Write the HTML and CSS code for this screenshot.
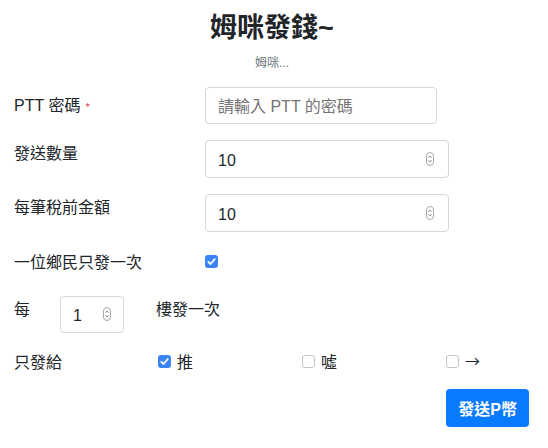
FILE: index.html
```html
<!DOCTYPE html>
<html lang="zh-Hant">
<head>
<meta charset="utf-8">
<title>姆咪發錢~</title>
<link rel="stylesheet" href="styles.css">
</head>
<body>
<div class="page">
  <header class="head">
    <h1 class="title">姆咪發錢~</h1>
    <p class="subtitle">姆咪...</p>
  </header>
  <form class="form">
    <div class="row row-pass">
      <label class="label label-mid">PTT 密碼<span class="req">*</span></label>
      <input class="control control-pass" type="password" placeholder="請輸入 PTT 的密碼">
    </div>
    <div class="row">
      <label class="label">發送數量</label>
      <div class="num num-wide">
        <input class="control" type="text" value="10">
        <svg class="spin" viewBox="0 0 8 14" width="8" height="14"><rect x="0.5" y="0.5" width="7" height="13" rx="3.5" fill="#fff" stroke="#a9a9a9"/><path d="M2.6 5.6 L4 4.2 L5.4 5.6 M2.6 8.4 L4 9.8 L5.4 8.4" fill="none" stroke="#555" stroke-width="0.9"/></svg>
      </div>
    </div>
    <div class="row">
      <label class="label">每筆稅前金額</label>
      <div class="num num-wide">
        <input class="control" type="text" value="10">
        <svg class="spin" viewBox="0 0 8 14" width="8" height="14"><rect x="0.5" y="0.5" width="7" height="13" rx="3.5" fill="#fff" stroke="#a9a9a9"/><path d="M2.6 5.6 L4 4.2 L5.4 5.6 M2.6 8.4 L4 9.8 L5.4 8.4" fill="none" stroke="#555" stroke-width="0.9"/></svg>
      </div>
    </div>
    <div class="row row-check">
      <label class="label">一位鄉民只發一次</label>
      <input class="check" type="checkbox" checked>
    </div>
    <div class="row row-floor">
      <span class="every">每</span>
      <div class="num num-small">
        <input class="control" type="text" value="1">
        <svg class="spin" viewBox="0 0 8 14" width="8" height="14"><rect x="0.5" y="0.5" width="7" height="13" rx="3.5" fill="#fff" stroke="#a9a9a9"/><path d="M2.6 5.6 L4 4.2 L5.4 5.6 M2.6 8.4 L4 9.8 L5.4 8.4" fill="none" stroke="#555" stroke-width="0.9"/></svg>
      </div>
      <span class="floor-text">樓發一次</span>
    </div>
    <div class="row row-targets">
      <span class="target-label">只發給</span>
      <label class="opt"><input class="check" type="checkbox" checked><span class="opt-text">推</span></label>
      <label class="opt"><input class="check" type="checkbox"><span class="opt-text">噓</span></label>
      <label class="opt"><input class="check" type="checkbox"><span class="opt-text arrow">→</span></label>
    </div>
    <div class="actions">
      <button class="btn" type="button">發送P幣</button>
    </div>
  </form>
</div>
</body>
</html>
```
FILE: styles.css
```css
* { box-sizing: border-box; }
html, body { margin: 0; padding: 0; background: #fff; }
body {
  font-family: "Liberation Sans", "Noto Sans CJK TC", sans-serif;
  font-size: 16px;
  line-height: 24px;
  color: #212529;
}
.page { padding: 0 14px; width: 548px; }
.head { text-align: center; padding-top: 11px; }
.title {
  margin: 0;
  font-size: 27px;
  line-height: 34px;
  font-weight: 700;
  padding-right: 4px;
}
.subtitle {
  margin: 9px 0 0;
  font-size: 12px;
  line-height: 18px;
  color: #6c757d;
  padding-right: 4px;
}
.form { margin-top: 15px; display: flex; flex-direction: column; }
.row { display: flex; align-items: flex-start; margin-bottom: 16px; }
.label { width: 191px; flex: none; padding-top: 2px; }
.label-mid { padding-top: 7px; }
.req { color: #dc3545; font-size: 11px; margin-left: 5px; vertical-align: top; position: relative; top: 1px; }
.control {
  display: block;
  height: 38px;
  padding: 3px 12px 0;
  font: inherit;
  color: #212529;
  background: #fff;
  border: 1px solid #d4d7db;
  border-radius: 4px;
  outline: none;
}
.control::placeholder { color: #757575; }
.control-pass { width: 232px; height: 37px; }
.num { position: relative; }
.num .control { width: 100%; }
.num-wide { width: 244px; }
.num-small { width: 64px; height: 37px; }
.num-small .control { height: 37px; }
.spin { position: absolute; top: 12px; right: 15px; }
.num-small .spin { right: 13px; top: 11px; }
.row-check { height: 26px; align-items: center; margin-bottom: 22px; }
.row-check .label { padding-top: 3px; }
.check {
  appearance: none;
  -webkit-appearance: none;
  width: 13px;
  height: 13px;
  margin: 0;
  border: 1.5px solid #c6c6c6;
  border-radius: 3px;
  background: #fff;
  flex: none;
}
.check:checked {
  border: none;
  background: #3a84f6 url("data:image/svg+xml,%3Csvg xmlns='http://www.w3.org/2000/svg' viewBox='0 0 13 13'%3E%3Cpath d='M3.3 6.8 L5.5 9 L9.7 4.2' fill='none' stroke='white' stroke-width='1.8' stroke-linecap='round' stroke-linejoin='round'/%3E%3C/svg%3E") center/13px 13px no-repeat;
}
.row-floor { margin-bottom: 15px; }
.every { width: 46px; flex: none; padding-top: 2px; }
.floor-text { margin-left: 32px; padding-top: 2px; }
.row-targets { height: 26px; align-items: center; margin-bottom: 15px; }
.target-label { width: 144px; flex: none; padding-top: 3px; }
.opt { width: 144px; flex: none; display: flex; align-items: center; gap: 6px; }
.opt:last-child { width: auto; }
.opt-text { padding-top: 3px; }
.arrow { font-family: "Noto Sans CJK TC", sans-serif; font-size: 15px; padding-top: 0; }
.actions { display: flex; justify-content: flex-end; padding-right: 5px; }
.btn {
  height: 38px;
  padding: 3px 12px 0;
  font: inherit;
  font-weight: 700;
  color: #fff;
  background: #0a7bff;
  border: none;
  border-radius: 4px;
}
```
